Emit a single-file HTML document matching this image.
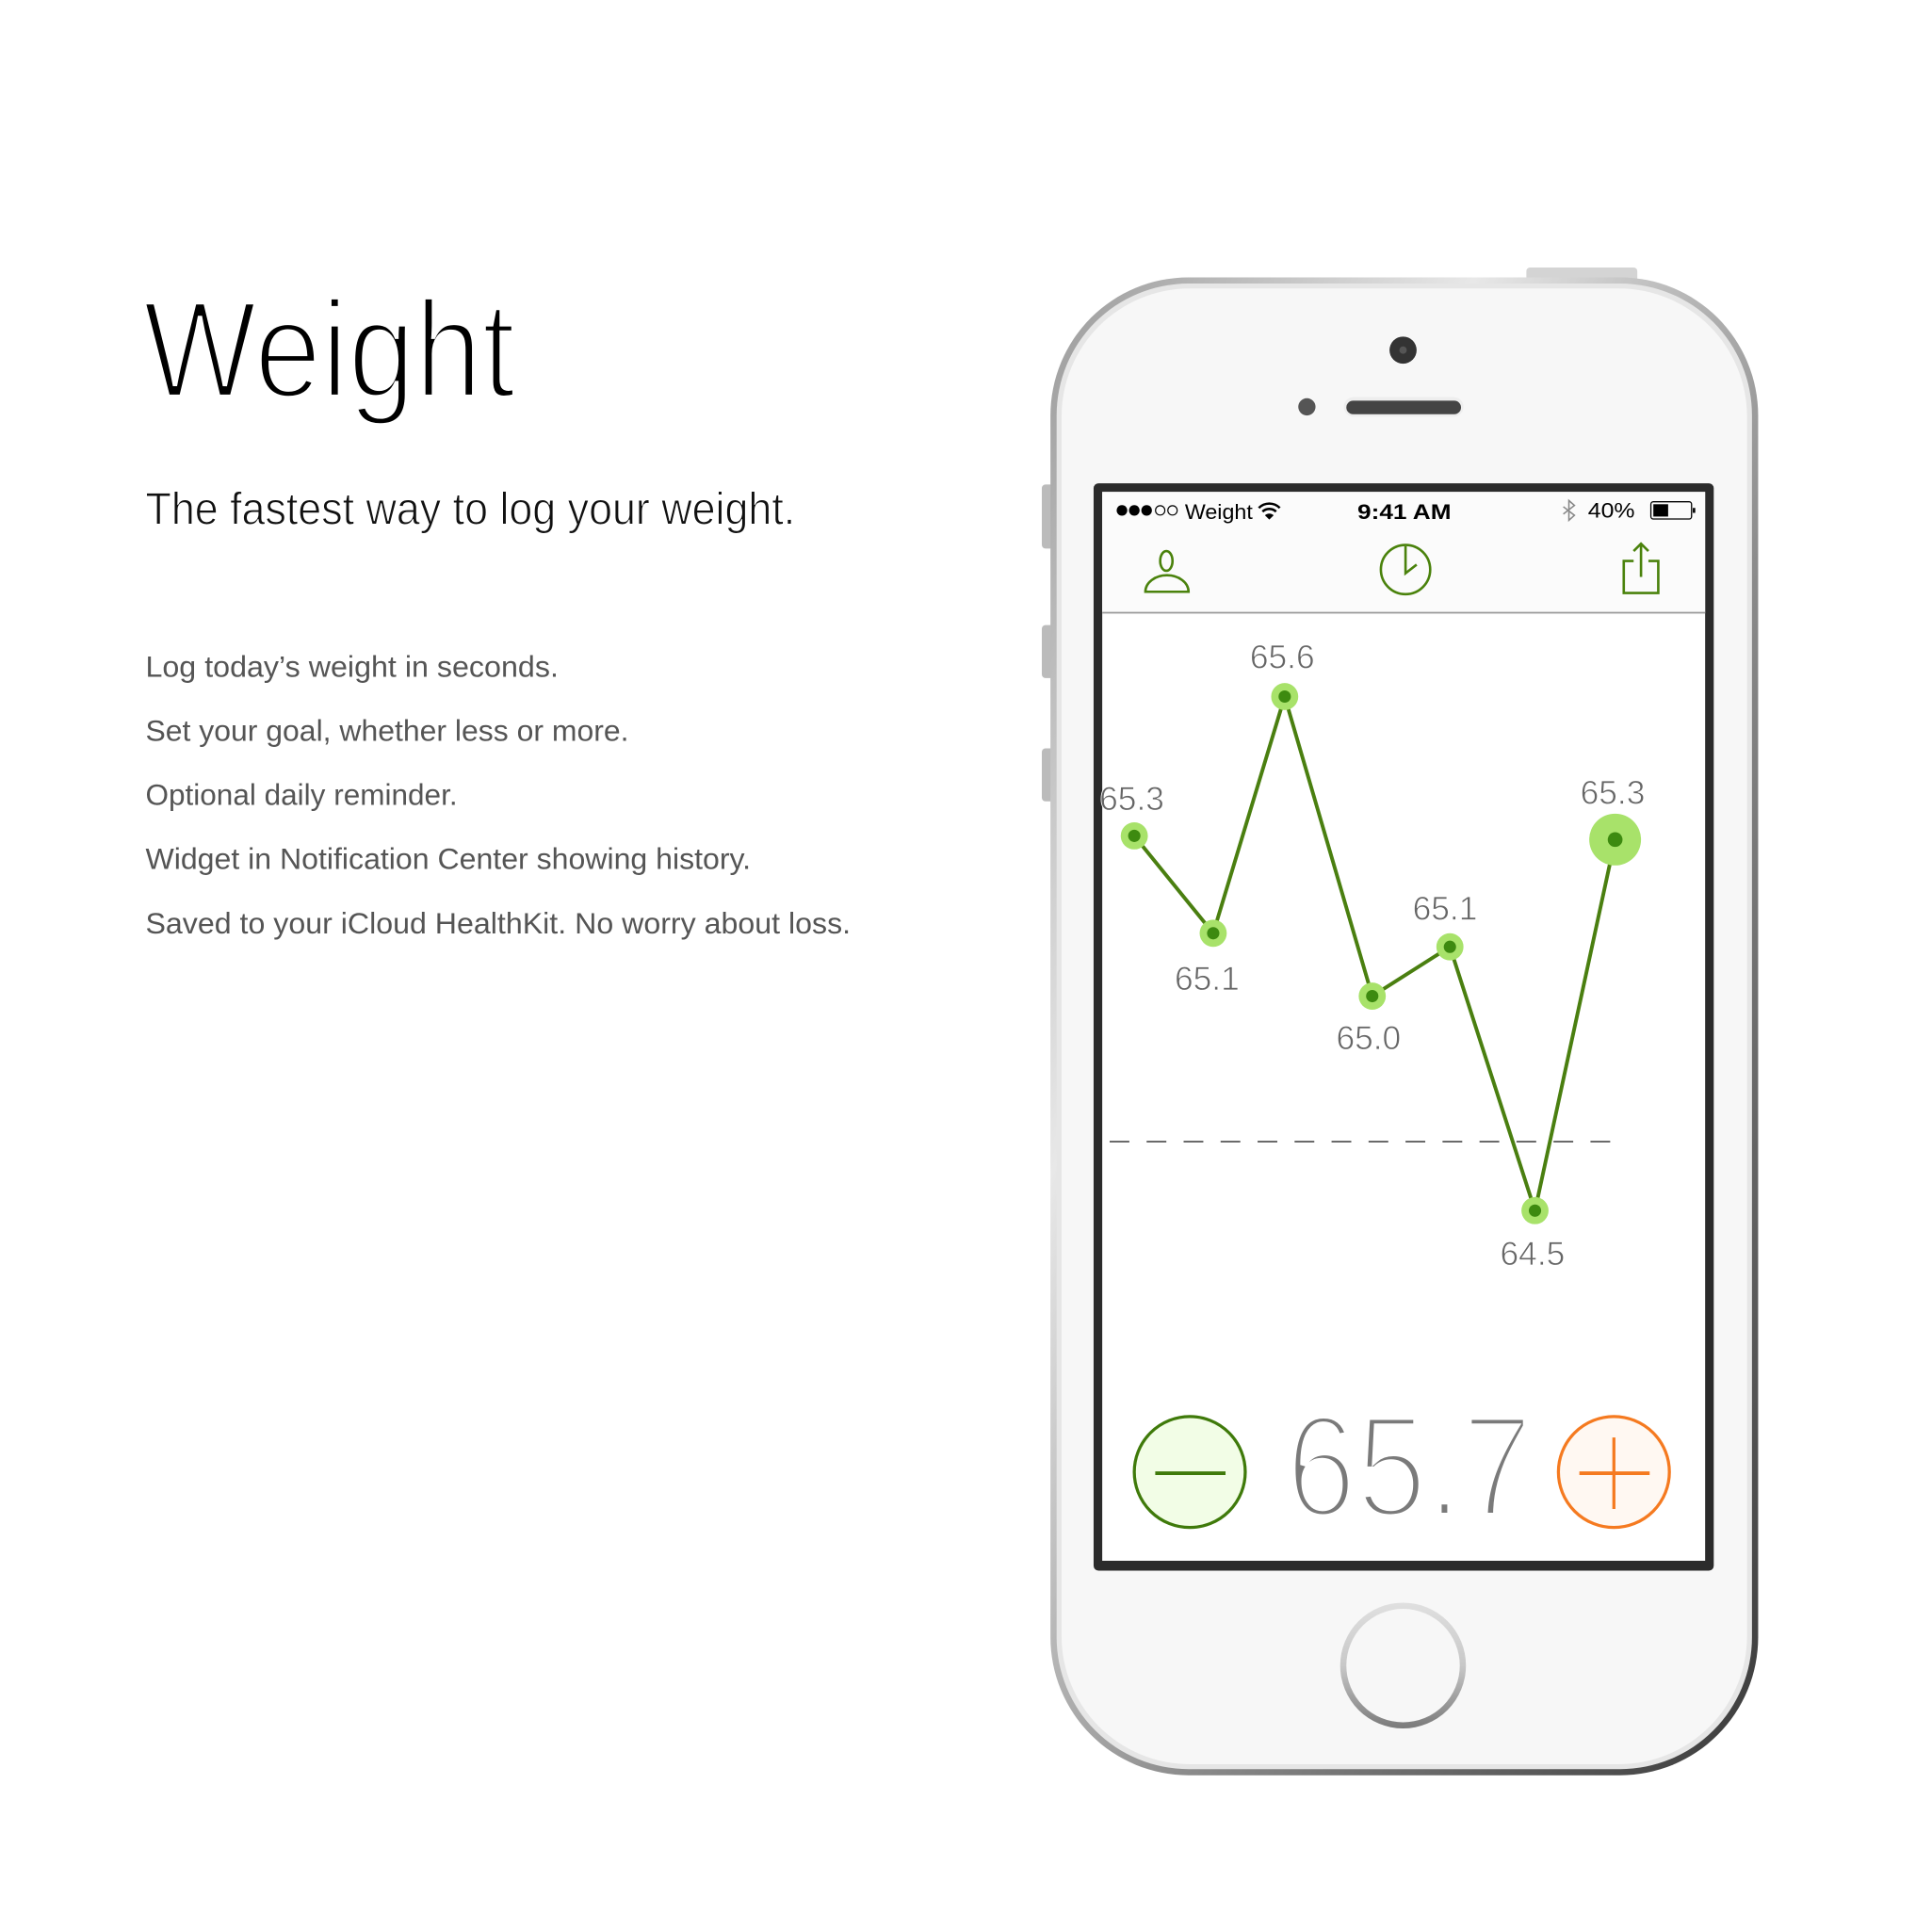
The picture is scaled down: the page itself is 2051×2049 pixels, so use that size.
<!DOCTYPE html>
<html><head><meta charset="utf-8"><style>
html,body{margin:0;padding:0;background:#fff;}
svg{display:block;}
text{font-family:"Liberation Sans",sans-serif;}
</style></head><body>
<svg width="2051" height="2049" viewBox="0 0 1567 1565.5" xmlns="http://www.w3.org/2000/svg">
<defs>
<linearGradient id="rim" x1="0" y1="0" x2="1" y2="1">
<stop offset="0" stop-color="#9a9a9a"/><stop offset="0.3" stop-color="#e8e8e8"/><stop offset="0.6" stop-color="#8a8a8a"/><stop offset="1" stop-color="#3a3a3a"/>
</linearGradient>
<linearGradient id="home" x1="0" y1="0" x2="0" y2="1">
<stop offset="0" stop-color="#e0e0e0"/><stop offset="0.5" stop-color="#c8c8c8"/><stop offset="1" stop-color="#7a7a7a"/>
</linearGradient>
</defs>
<rect width="1567" height="1566" fill="#fff"/>

<text x="116" y="322" font-size="112" fill="#000" textLength="302" lengthAdjust="spacingAndGlyphs" stroke="#fff" stroke-width="4">Weight</text>
<text x="118" y="425" font-size="37" fill="#111" textLength="527" lengthAdjust="spacingAndGlyphs" stroke="#fff" stroke-width="0.8">The fastest way to log your weight.</text>
<g font-size="24" fill="#555">
<text x="118" y="549" textLength="335" lengthAdjust="spacingAndGlyphs">Log today’s weight in seconds.</text>
<text x="118" y="601" textLength="392" lengthAdjust="spacingAndGlyphs">Set your goal, whether less or more.</text>
<text x="118" y="653" textLength="253" lengthAdjust="spacingAndGlyphs">Optional daily reminder.</text>
<text x="118" y="705" textLength="491" lengthAdjust="spacingAndGlyphs">Widget in Notification Center showing history.</text>
<text x="118" y="757" textLength="572" lengthAdjust="spacingAndGlyphs">Saved to your iCloud HealthKit. No worry about loss.</text>
</g>

<!-- phone -->
<rect x="1238" y="217" width="90" height="12" rx="3" fill="#d4d4d4"/>
<rect x="845" y="393" width="10" height="52" rx="3" fill="#bbb"/>
<rect x="845" y="507" width="10" height="43" rx="3" fill="#bbb"/>
<rect x="845" y="607" width="10" height="43" rx="3" fill="#bbb"/>
<rect x="852" y="225" width="574" height="1215" rx="112" fill="url(#rim)"/>
<rect x="857" y="230" width="564" height="1205" rx="107" fill="#e6e6e6"/>
<rect x="861" y="234" width="556" height="1197" rx="104" fill="#f7f7f7"/>
<circle cx="1138" cy="284" r="11" fill="#333"/>
<circle cx="1138" cy="284" r="3" fill="#555"/>
<circle cx="1060" cy="330" r="7" fill="#555"/>
<rect x="1090" y="322" width="97" height="16" rx="8" fill="#eee"/>
<rect x="1092" y="325" width="93" height="11" rx="5.5" fill="#444"/>

<rect x="887" y="392" width="503" height="882" rx="4" fill="#2b2b2b"/>
<rect x="894" y="399" width="489" height="867" fill="#fff"/>
<rect x="894" y="399" width="489" height="98" fill="#fbfbfb"/>
<line x1="894" y1="497" x2="1383" y2="497" stroke="#999" stroke-width="1.3"/>

<!-- status bar -->
<g fill="#000">
<circle cx="910" cy="414" r="4.3"/><circle cx="920" cy="414" r="4.3"/><circle cx="930" cy="414" r="4.3"/>
<circle cx="941" cy="414" r="3.8" fill="none" stroke="#000" stroke-width="0.9"/><circle cx="951" cy="414" r="3.8" fill="none" stroke="#000" stroke-width="0.9"/>
<text x="961" y="421" font-size="17" textLength="55" lengthAdjust="spacingAndGlyphs">Weight</text>
<path d="M1021 412 a12 12 0 0 1 17 0 M1024 415 a8 8 0 0 1 11 0" fill="none" stroke="#000" stroke-width="2"/>
<path d="M1026 418 l3.5 3.5 3.5 -3.5 a5 5 0 0 0 -7 0z"/>
<text x="1101" y="421" font-size="17" font-weight="bold" textLength="76" lengthAdjust="spacingAndGlyphs">9:41 AM</text>
<path d="M1268 411 l9 7 -4.5 4 v-16 l4.5 4 -9 7" fill="none" stroke="#888" stroke-width="1.2"/>
<text x="1288" y="420" font-size="17" textLength="38" lengthAdjust="spacingAndGlyphs">40%</text>
<rect x="1339" y="407" width="33" height="14" rx="2" fill="none" stroke="#000" stroke-width="1"/>
<rect x="1341" y="409" width="12" height="10" fill="#000"/>
<rect x="1373" y="412" width="2" height="4" fill="#000"/>
</g>

<!-- nav icons -->
<g fill="none" stroke="#4a820c" stroke-width="2">
<ellipse cx="946" cy="455" rx="5" ry="8"/>
<path d="M929 480 a17 13 0 0 1 35 0 z"/>
<circle cx="1140" cy="462" r="20"/>
<path d="M1140 443 v22 l9 -7"/>
<path d="M1325 455 h-8 v26 h28 v-26 h-8 M1331 468 v-27 M1325 447 l6 -6 6 6"/>
</g>

<!-- chart -->
<line x1="900" y1="926" x2="1312" y2="926" stroke="#555" stroke-width="1.3" stroke-dasharray="16 14"/>
<polyline points="920,678 984,757 1042,565 1113,808 1176,768 1245,982 1310,681" fill="none" stroke="#4a7f10" stroke-width="3"/>
<g fill="#a8e26a">
<circle cx="920" cy="678" r="11"/><circle cx="984" cy="757" r="11"/><circle cx="1042" cy="565" r="11"/>
<circle cx="1113" cy="808" r="11"/><circle cx="1176" cy="768" r="11"/><circle cx="1245" cy="982" r="11"/>
<circle cx="1310" cy="681" r="21"/>
</g>
<g fill="#3d8a10">
<circle cx="920" cy="678" r="5"/><circle cx="984" cy="757" r="5"/><circle cx="1042" cy="565" r="5"/>
<circle cx="1113" cy="808" r="5"/><circle cx="1176" cy="768" r="5"/><circle cx="1245" cy="982" r="5"/>
<circle cx="1310" cy="681" r="6"/>
</g>
<g font-size="27" fill="#666" text-anchor="middle" stroke="#fff" stroke-width="0.6">
<text x="918" y="657">65.3</text>
<text x="979" y="803">65.1</text>
<text x="1040" y="542">65.6</text>
<text x="1110" y="851">65.0</text>
<text x="1172" y="746">65.1</text>
<text x="1243" y="1026">64.5</text>
<text x="1308" y="652">65.3</text>
</g>

<!-- controls -->
<circle cx="965" cy="1194" r="45" fill="#f2fde6" stroke="#3f7a0a" stroke-width="2.5"/>
<line x1="937" y1="1195" x2="994" y2="1195" stroke="#3f7a0a" stroke-width="3"/>
<circle cx="1309" cy="1194" r="45" fill="#fff8f2" stroke="#f57a20" stroke-width="2.5"/>
<line x1="1281" y1="1195" x2="1338" y2="1195" stroke="#f57a20" stroke-width="3"/>
<line x1="1309" y1="1166" x2="1309" y2="1224" stroke="#f57a20" stroke-width="2.5"/>
<text x="1043" y="1230" font-size="118" fill="#7a7a7a" stroke="#fff" stroke-width="6" textLength="200" lengthAdjust="spacingAndGlyphs">65.7</text>

<!-- home button -->
<circle cx="1138" cy="1351" r="51" fill="url(#home)"/>
<circle cx="1138" cy="1351" r="46" fill="#f7f7f7"/>
</svg>
</body></html>
